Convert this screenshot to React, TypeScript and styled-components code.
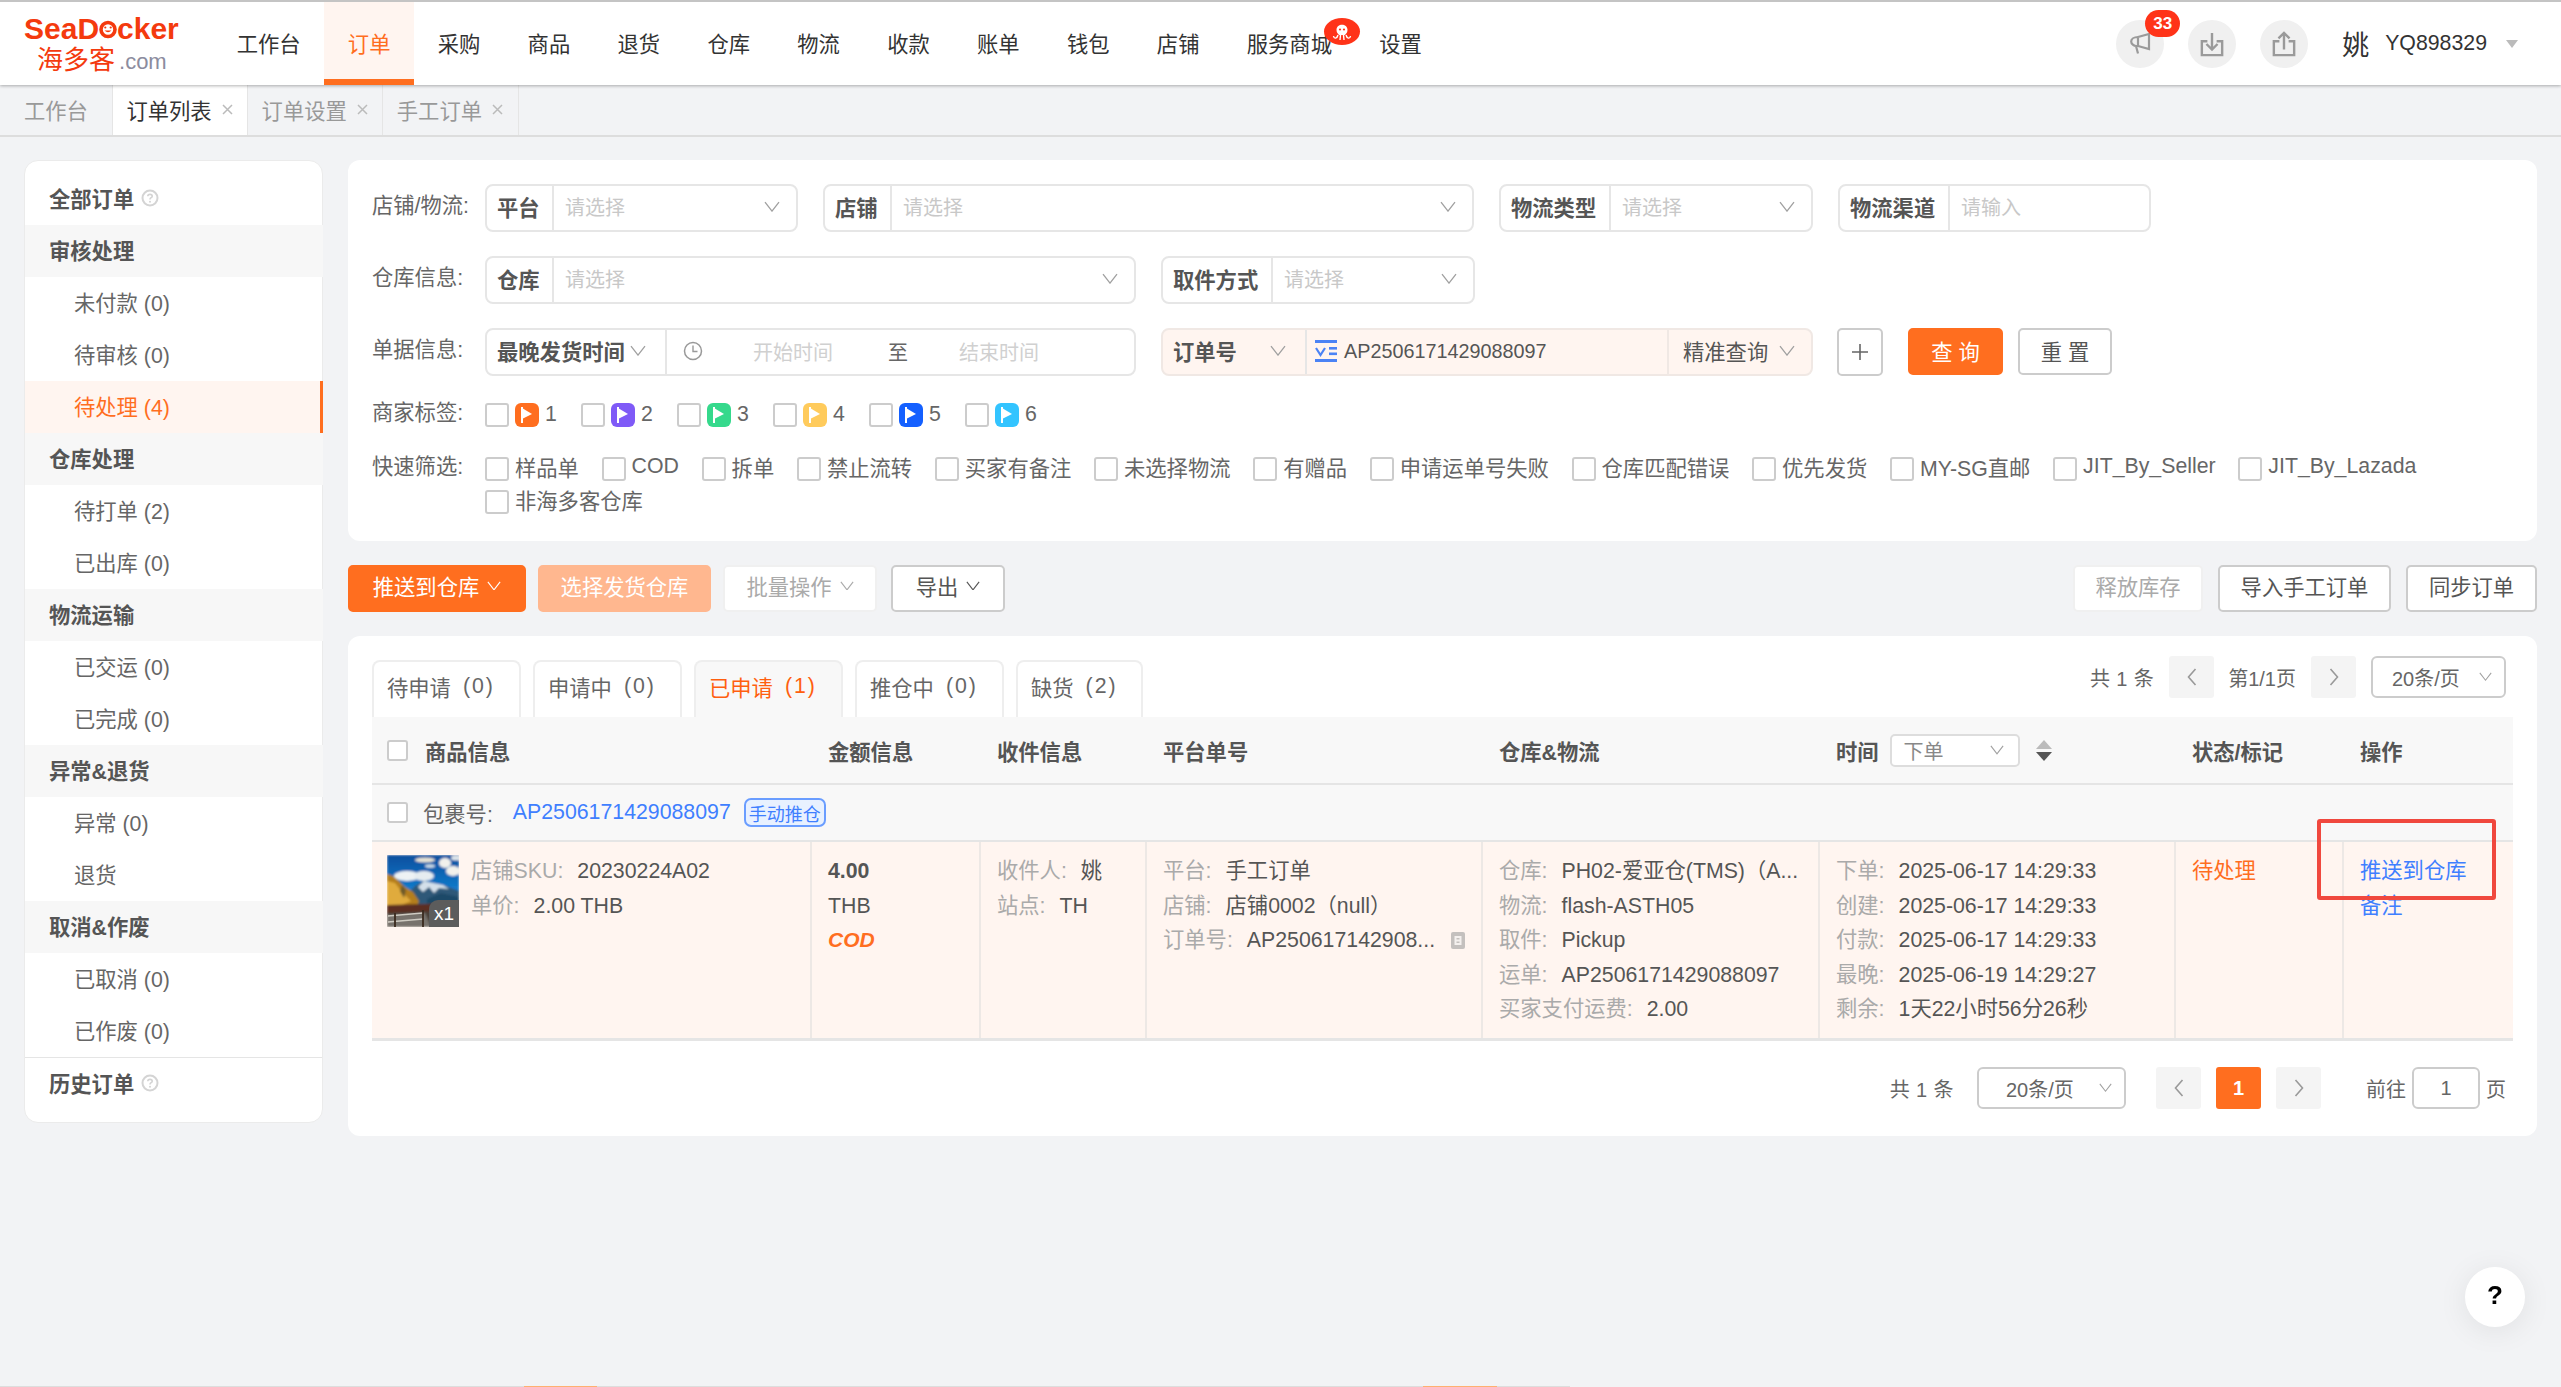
import styled, { createGlobalStyle } from 'styled-components';

const orange = '#ff6e1f';
const blue = '#3f7fff';

const GlobalStyle = createGlobalStyle`
  html, body {
    margin: 0;
    padding: 0;
    background: #f2f3f5;
    font-family: "Liberation Sans", "Noto Sans CJK SC", sans-serif;
    font-size: 21.3px;
    color: #666;
  }
  * { box-sizing: border-box; }
`;

const Chevron = ({ color = '#a0a0a0', width = 16 }: { color?: string; width?: number }) => (
  <svg width={width} height={width * 0.7} viewBox="0 0 16 11" fill="none" style={{ flexShrink: 0 }}>
    <path d="M1 1 L8 10 L15 1" stroke={color} strokeWidth="1.3" />
  </svg>
);

const CloseIcon = () => (
  <svg width="13" height="13" viewBox="0 0 13 13" fill="none">
    <path d="M2 2 L11 11 M11 2 L2 11" stroke="#bbb" strokeWidth="1.5" />
  </svg>
);

const HelpIcon = () => (
  <svg width="18" height="18" viewBox="0 0 18 18" fill="none">
    <circle cx="9" cy="9" r="7.5" stroke="#d4d4d4" strokeWidth="2" />
    <path d="M6.8 7.2 C6.8 4.8 11.2 4.8 11.2 7.2 C11.2 8.8 9 8.6 9 10.4" stroke="#d4d4d4" strokeWidth="1.6" />
    <circle cx="9" cy="12.8" r="1" fill="#d4d4d4" />
  </svg>
);

const FlagIcon = () => (
  <svg width="14" height="18" viewBox="0 0 14 18">
    <path d="M2 1 L2 17" stroke="#fff" strokeWidth="2" />
    <path d="M2 2 L12 8 L2 13 Z" fill="#fff" />
  </svg>
);

const Logo = () => (
  <LogoBox>
    <LogoTop>
      SeaD
      <svg width="18" height="23" viewBox="0 0 18 23" fill="none">
        <circle cx="9" cy="13.5" r="7" stroke="#f43a0e" strokeWidth="3.6" />
        <circle cx="6.3" cy="11.5" r="1.1" fill="#f43a0e" />
        <circle cx="11.7" cy="11.5" r="1.1" fill="#f43a0e" />
        <path d="M5.5 14.5 Q9 18 12.5 14.5 Z" fill="#f43a0e" />
      </svg>
      cker
    </LogoTop>
    <LogoBottom>
      海多客<LogoCom>.com</LogoCom>
    </LogoBottom>
  </LogoBox>
);

const LogoBox = styled.div`
  width: 213px;
  padding: 11px 0 0 24px;
  flex-shrink: 0;
`;

const LogoTop = styled.div`
  color: #f43a0e;
  font-size: 30px;
  font-weight: 700;
  line-height: 32px;
  white-space: nowrap;
`;

const LogoBottom = styled.div`
  color: #f43a0e;
  font-size: 26px;
  line-height: 30px;
  padding-left: 13px;
  white-space: nowrap;
`;

const LogoCom = styled.span`
  color: #8c8c9e;
  font-size: 22px;
  margin-left: 4px;
`;

const Octopus = () => (
  <svg width="22" height="20" viewBox="0 0 22 20" fill="none">
    <path d="M5.5 8 C5.5 1 16.5 1 16.5 8 C16.5 11 14.5 12 14 13 L8 13 C7.5 12 5.5 11 5.5 8 Z" fill="#fff" />
    <circle cx="9" cy="7.5" r="1.1" fill="#ff3318" />
    <circle cx="13" cy="7.5" r="1.1" fill="#ff3318" />
    <path d="M7 13 C6 17 3 17 2.5 14 M9.5 13 L9 18 M12.5 13 L13 18 M15 13 C16 17 19 17 19.5 14" stroke="#fff" strokeWidth="1.4" />
  </svg>
);

const navItems = ['工作台', '订单', '采购', '商品', '退货', '仓库', '物流', '收款', '账单', '钱包', '店铺', '服务商城', '设置'];

const Header = styled.header`
  height: 85px;
  display: flex;
  background: #fff;
  border-top: 2px solid #c4c4c4;
  box-shadow: 0 1px 3px rgba(0, 0, 0, 0.3);
  position: relative;
  z-index: 2;
`;

const NavList = styled.nav`
  display: flex;
`;

const NavItem = styled.div<{ $active?: boolean }>`
  position: relative;
  display: flex;
  align-items: center;
  padding: 4px 23.65px 0;
  height: 83px;
  color: ${(p) => (p.$active ? orange : '#333')};
  background: ${(p) => (p.$active ? '#fff5f0' : 'transparent')};
  border-bottom: 6px solid ${(p) => (p.$active ? orange : 'transparent')};
`;

const NavBadge = styled.div`
  position: absolute;
  top: 16px;
  right: -4px;
  width: 36px;
  height: 27px;
  border-radius: 50%;
  background: #ff3318;
  display: flex;
  align-items: center;
  justify-content: center;
`;

const HeaderRight = styled.div`
  margin-left: auto;
  display: flex;
  align-items: center;
  padding-right: 43px;
`;

const RoundIcon = styled.div`
  position: relative;
  width: 48px;
  height: 48px;
  border-radius: 50%;
  background: #f0f0f0;
  margin-right: 24px;
  display: flex;
  align-items: center;
  justify-content: center;
`;

const CountBadge = styled.div`
  position: absolute;
  top: -10px;
  left: 29px;
  width: 35px;
  height: 27px;
  border-radius: 14px;
  background: #ff3318;
  color: #fff;
  font-size: 17px;
  font-weight: 700;
  text-align: center;
  line-height: 27px;
`;

const Avatar = styled.div`
  font-size: 27px;
  color: #333;
  margin: 0 16px 0 10px;
`;

const UserName = styled.div`
  color: #333;
  margin-right: 19px;
`;

const CaretDown = styled.div`
  width: 0;
  height: 0;
  border-left: 6px solid transparent;
  border-right: 6px solid transparent;
  border-top: 8px solid #bbb;
`;

const TabBar = styled.div`
  height: 52px;
  display: flex;
  border-bottom: 2px solid #ddd;
`;

const PageTab = styled.div<{ $active?: boolean; $pad: number }>`
  display: flex;
  align-items: center;
  gap: 9px;
  padding: 0 ${(p) => p.$pad}px 2px;
  color: ${(p) => (p.$active ? '#333' : '#999')};
  background: ${(p) => (p.$active ? '#fff' : 'transparent')};
  border-right: 1px solid #e5e5e5;
`;

const Content = styled.div`
  display: flex;
  gap: 25px;
  padding: 23px 24px 0;
  align-items: flex-start;
`;

const Sidebar = styled.aside`
  width: 299px;
  flex-shrink: 0;
  background: #fff;
  border: 1px solid #ebebeb;
  border-radius: 14px;
  padding: 12px 0;
`;

const SideRow = styled.div<{ $kind: 'head' | 'group' | 'item' | 'active' }>`
  height: 52px;
  display: flex;
  align-items: center;
  gap: 7px;
  padding-bottom: 3px;
  padding-left: ${(p) => (p.$kind === 'head' || p.$kind === 'group' ? 24 : 49)}px;
  font-weight: ${(p) => (p.$kind === 'head' || p.$kind === 'group' ? 700 : 400)};
  color: ${(p) => (p.$kind === 'active' ? orange : p.$kind === 'item' ? '#666' : '#555')};
  background: ${(p) => (p.$kind === 'group' ? '#f7f7f7' : p.$kind === 'active' ? '#fff5f0' : 'transparent')};
  border-right: ${(p) => (p.$kind === 'active' ? `3px solid ${orange}` : 'none')};
  margin-right: -1px;
`;

const SideDivider = styled.div`
  height: 1px;
  background: #e5e5e5;
`;

const sideRows: { text: string; kind: 'head' | 'group' | 'item' | 'active' }[] = [
  { text: '审核处理', kind: 'group' },
  { text: '未付款 (0)', kind: 'item' },
  { text: '待审核 (0)', kind: 'item' },
  { text: '待处理 (4)', kind: 'active' },
  { text: '仓库处理', kind: 'group' },
  { text: '待打单 (2)', kind: 'item' },
  { text: '已出库 (0)', kind: 'item' },
  { text: '物流运输', kind: 'group' },
  { text: '已交运 (0)', kind: 'item' },
  { text: '已完成 (0)', kind: 'item' },
  { text: '异常&退货', kind: 'group' },
  { text: '异常 (0)', kind: 'item' },
  { text: '退货', kind: 'item' },
  { text: '取消&作废', kind: 'group' },
  { text: '已取消 (0)', kind: 'item' },
  { text: '已作废 (0)', kind: 'item' },
];

const Main = styled.main`
  flex: 1;
  min-width: 0;
  display: flex;
  flex-direction: column;
  gap: 24px;
`;

const FilterCard = styled.section`
  background: #fff;
  border-radius: 12px;
  height: 381px;
  padding: 24px 24px 0;
`;

const FilterRow = styled.div<{ $mb: number; $start?: boolean }>`
  display: flex;
  align-items: ${(p) => (p.$start ? 'flex-start' : 'center')};
  margin-bottom: ${(p) => p.$mb}px;
`;

const FilterLabel = styled.div`
  width: 113px;
  height: 24px;
  line-height: 21px;
  flex-shrink: 0;
  color: #666;
  white-space: nowrap;
`;

const Fields = styled.div`
  display: flex;
  align-items: center;
  gap: 25px;
`;

const Field = styled.div<{ $w: number; $tinted?: boolean }>`
  width: ${(p) => p.$w}px;
  height: 48px;
  display: flex;
  align-items: stretch;
  border: 2px solid ${(p) => (p.$tinted ? '#f0e8e4' : '#e6e6e6')};
  border-radius: 8px;
  background: ${(p) => (p.$tinted ? '#fff5f0' : '#fff')};
`;

const FieldKey = styled.div<{ $w: number }>`
  width: ${(p) => p.$w}px;
  flex-shrink: 0;
  display: flex;
  align-items: center;
  justify-content: space-between;
  padding: 0 0 3px 10px;
  font-weight: 700;
  color: #555;
  border-right: 2px solid #e6e6e6;
  white-space: nowrap;

  svg {
    margin-right: 19px;
  }
`;

const FieldBody = styled.div`
  flex: 1;
  min-width: 0;
  display: flex;
  align-items: center;
  justify-content: space-between;
  padding: 0 16px 3px 11px;
`;

const Placeholder = styled.span`
  color: #c8c8c8;
  font-size: 20px;
`;

const DateRange = styled.div`
  flex: 1;
  display: flex;
  align-items: center;
  padding: 0 0 2px 16px;
  font-size: 20px;
`;

const DateText = styled.span<{ $ml: number }>`
  margin-left: ${(p) => p.$ml}px;
  color: #d0d0d0;
`;

const DateTo = styled.span`
  margin-left: 55px;
  color: #666;
`;

const OrderValue = styled.div`
  flex: 1;
  display: flex;
  align-items: center;
  gap: 7px;
  padding: 0 0 2px 8px;
  font-size: 19.8px;
  color: #555;
`;

const ExactBox = styled.div`
  width: 144px;
  flex-shrink: 0;
  display: flex;
  align-items: center;
  justify-content: space-between;
  padding: 0 16px 3px 14px;
  color: #555;
  border-left: 2px solid #f0e8e4;
  white-space: nowrap;
`;

const Button = styled.button<{ $w: number; $kind?: 'primary' | 'soft' | 'plain' | 'muted' }>`
  width: ${(p) => p.$w}px;
  height: 47px;
  flex-shrink: 0;
  display: flex;
  align-items: center;
  justify-content: center;
  gap: 8px;
  padding: 0 0 3px ${(p) => (p.$w < 100 ? 6 : 0)}px;
  font: inherit;
  border-radius: 5px;
  border: 2px solid
    ${(p) =>
      p.$kind === 'primary' ? orange : p.$kind === 'soft' ? '#ffb78f' : p.$kind === 'muted' ? '#f0f0f0' : '#ccc'};
  background: ${(p) => (p.$kind === 'primary' ? orange : p.$kind === 'soft' ? '#ffb78f' : '#fff')};
  color: ${(p) => (p.$kind === 'primary' || p.$kind === 'soft' ? '#fff' : p.$kind === 'muted' ? '#aaa' : '#555')};
  letter-spacing: ${(p) => (p.$w < 100 ? '6px' : '0')};
`;

const SearchButtons = styled.div`
  display: flex;
  margin-left: -1px;
  gap: 15px;
`;

const PlusButton = styled(Button)`
  margin-right: 10px;
  padding: 0;
  height: 48px;
`;

const Checkbox = styled.span<{ $size?: number }>`
  display: inline-block;
  width: ${(p) => p.$size ?? 24}px;
  height: ${(p) => p.$size ?? 24}px;
  flex-shrink: 0;
  border: 2px solid #ccc;
  border-radius: 3px;
  background: #fff;
`;

const MarkRow = styled.div`
  display: flex;
`;

const MarkItem = styled.div`
  width: 96px;
  display: flex;
  align-items: center;
  gap: 6px;
`;

const MarkFlag = styled.span<{ $color: string }>`
  width: 24px;
  height: 24px;
  border-radius: 6px;
  background: ${(p) => p.$color};
  display: flex;
  align-items: center;
  justify-content: center;
`;

const QuickWrap = styled.div`
  display: flex;
  flex-wrap: wrap;
  row-gap: 9px;
  column-gap: 22.7px;
  width: 2020px;
`;

const QuickItem = styled.label`
  display: flex;
  align-items: center;
  gap: 6px;
  height: 24px;
  white-space: nowrap;
`;

const QuickText = styled.span`
  margin-top: -6px;
`;

const ActionRow = styled.div`
  display: flex;
  gap: 12px;

  button {
    padding-bottom: 6px;
  }
`;

const ActionGap = styled.div`
  margin-left: auto;
  display: flex;
  gap: 15px;
`;

const ExportGap = styled.div`
  display: flex;
  gap: 14px;
`;

const TableCard = styled.section`
  background: #fff;
  border-radius: 12px;
  height: 500px;
  padding: 20px 24px 0;
`;

const TopRow = styled.div`
  height: 61px;
  display: flex;
  justify-content: space-between;
`;

const StatusTabs = styled.div`
  align-self: flex-end;
  display: flex;
  gap: 12px;
`;

const StatusTab = styled.div<{ $active?: boolean; $w: number }>`
  width: ${(p) => p.$w}px;
  height: 57px;
  padding: 0 0 6px 13px;
  display: flex;
  align-items: center;
  gap: 12px;
  white-space: nowrap;
  color: ${(p) => (p.$active ? '#ff5f0f' : '#666')};
  background: ${(p) => (p.$active ? '#f8f8f8' : '#fff')};
  border: 2px solid #eee;
  border-bottom: none;
  border-radius: 8px 8px 0 0;
`;

const TabCount = styled.span`
  letter-spacing: 2px;
`;

const Pager = styled.div`
  display: flex;
  align-items: center;
  padding-right: 7px;
  font-size: 20px;
  height: 42px;
  white-space: nowrap;
`;

const PagerText = styled.span<{ $ml?: number; $wide?: boolean }>`
  margin-left: ${(p) => p.$ml ?? 0}px;
  letter-spacing: ${(p) => (p.$wide ? '0.4px' : '0')};
`;

const PageBtn = styled.div<{ $ml: number; $active?: boolean }>`
  width: 45px;
  height: 42px;
  margin-left: ${(p) => p.$ml}px;
  border-radius: 3px;
  background: ${(p) => (p.$active ? orange : '#f4f4f4')};
  color: #fff;
  font-weight: 700;
  display: flex;
  align-items: center;
  justify-content: center;
`;

const PagerSelect = styled.div<{ $w: number; $ml: number; $pl: number }>`
  width: ${(p) => p.$w}px;
  height: 42px;
  margin-left: ${(p) => p.$ml}px;
  padding: 0 12px 0 ${(p) => p.$pl}px;
  border: 2px solid #ccc;
  border-radius: 6px;
  display: flex;
  align-items: center;
  justify-content: space-between;
  background: #fff;
`;

const PageInput = styled.div`
  width: 68px;
  height: 42px;
  margin: 0 6px;
  border: 2px solid #ccc;
  border-radius: 6px;
  display: flex;
  align-items: center;
  justify-content: center;
`;

const TableWrap = styled.div`
  position: relative;
`;

const RedBox = styled.div`
  position: absolute;
  left: 1945px;
  top: 102px;
  width: 179px;
  height: 81px;
  border: 4px solid #f0483e;
  border-radius: 3px;
  pointer-events: none;
`;

const columns = '440px 169px 166px 336px 337px 356px 168px 169px';

const HeadRow = styled.div`
  display: grid;
  grid-template-columns: ${columns};
  height: 68px;
  background: #f8f8f8;
  border-bottom: 2px solid #e5e5e5;
`;

const HeadCell = styled.div`
  display: flex;
  align-items: center;
  gap: 11px;
  padding-left: 16px;
  font-weight: 700;
  color: #555;
  white-space: nowrap;
`;

const HeadFirst = styled(HeadCell)`
  padding-left: 15px;
  gap: 17px;
`;

const HeadSelect = styled.div`
  width: 130px;
  height: 33px;
  padding: 0 14px 0 12px;
  border: 2px solid #ddd;
  border-radius: 5px;
  background: #fff;
  display: flex;
  align-items: center;
  justify-content: space-between;
  font-size: 20px;
  font-weight: 400;
  color: #888;
`;

const SortBox = styled.div`
  display: flex;
  flex-direction: column;
  gap: 3px;
  margin-left: 5px;
`;

const SortUp = styled.div`
  width: 0;
  height: 0;
  border-left: 8px solid transparent;
  border-right: 8px solid transparent;
  border-bottom: 9px solid #bbb;
`;

const SortDown = styled.div`
  width: 0;
  height: 0;
  border-left: 8px solid transparent;
  border-right: 8px solid transparent;
  border-top: 9px solid #555;
`;

const PackRow = styled.div`
  height: 57px;
  display: flex;
  align-items: center;
  padding-left: 15px;
  background: #f8f8f8;
  border-bottom: 2px solid #e5e5e5;
  white-space: nowrap;
`;

const PackLabel = styled.span`
  margin-left: 15px;
  color: #666;
`;

const PackLink = styled.span`
  margin-left: 20px;
  color: ${blue};
`;

const PackBadge = styled.span`
  margin-left: 13px;
  width: 82px;
  height: 29px;
  border: 2px solid #6a9dff;
  border-radius: 7px;
  background: #e8f1ff;
  color: ${blue};
  font-size: 18px;
  display: flex;
  align-items: center;
  justify-content: center;
`;

const DataRow = styled.div`
  display: grid;
  grid-template-columns: ${columns};
  height: 199px;
  background: #fff5f0;
  border-bottom: 3px solid #e5e5e5;
`;

const DataCell = styled.div`
  padding: 12px 0 0 16px;
  line-height: 34.5px;
  border-right: 2px solid #ede8e5;
  white-space: nowrap;
  color: #555;

  &:last-child {
    border-right: none;
  }
`;

const GoodsCell = styled(DataCell)`
  display: flex;
  gap: 12px;
  padding-left: 15px;
`;

const Thumb = styled.div`
  position: relative;
  width: 72px;
  height: 72px;
  margin-top: 1px;
  flex-shrink: 0;
  overflow: hidden;
`;

const ThumbCount = styled.div`
  position: absolute;
  right: 0;
  bottom: 0;
  width: 30px;
  height: 27px;
  border-radius: 9px 0 0 0;
  background: #5c5c5c;
  color: #fff;
  font-size: 19px;
  line-height: 27px;
  text-align: center;
`;

const Line = styled.div`
  display: flex;
  align-items: center;
`;

const Key = styled.span`
  color: #aaa;
  margin-right: 14px;
`;

const BoldValue = styled.div`
  font-weight: 700;
  color: #555;
`;

const CodText = styled.div`
  color: ${orange};
  font-weight: 700;
  font-style: italic;
  font-size: 21px;
`;

const StatusText = styled.div`
  color: ${orange};
`;

const LinkText = styled.div`
  color: ${blue};
`;

const CopyIcon = styled.span`
  margin-left: 15px;
  display: flex;
`;

const BottomPager = styled.div`
  display: flex;
  justify-content: flex-end;
  margin-top: 26px;
`;

const HelpButton = styled.div`
  position: fixed;
  right: 36px;
  bottom: 60px;
  width: 60px;
  height: 60px;
  border-radius: 50%;
  background: #fff;
  box-shadow: 0 4px 30px rgba(0, 0, 0, 0.08);
  color: #000;
  font-size: 26px;
  font-weight: 700;
  padding-bottom: 3px;
  display: flex;
  align-items: center;
  justify-content: center;
`;

const BottomLine = styled.div`
  position: fixed;
  left: 0;
  bottom: 0;
  width: 1570px;
  height: 1px;
  background: linear-gradient(
    to right,
    #ddd 524px,
    #ffb070 524px,
    #ffb070 597px,
    #ddd 597px,
    #ddd 1423px,
    #ffb070 1423px,
    #ffb070 1497px,
    #ddd 1497px
  );
`;

const PageWrap = styled.div`
  position: relative;
  height: 1387px;
  overflow: hidden;
`;

const ThumbPicture = () => (
  <svg width="72" height="72" viewBox="0 0 72 72">
    <defs>
      <linearGradient id="thumbSky" x1="0" y1="0" x2="0" y2="1">
        <stop offset="0" stopColor="#0a4f9e" />
        <stop offset="0.45" stopColor="#1278c8" />
      </linearGradient>
      <filter id="thumbSoft">
        <feGaussianBlur stdDeviation="0.8" />
      </filter>
    </defs>
    <g filter="url(#thumbSoft)">
      <rect width="72" height="72" fill="url(#thumbSky)" />
      <ellipse cx="38" cy="5" rx="10" ry="2.5" fill="#e6e2d4" />
      <ellipse cx="43" cy="11" rx="5" ry="1.8" fill="#cfdde6" />
      <ellipse cx="58" cy="8" rx="6" ry="5" fill="#f2f1ec" />
      <ellipse cx="66" cy="16" rx="7" ry="5" fill="#f2f1ec" />
      <ellipse cx="69" cy="3" rx="5" ry="2.5" fill="#dfe6ea" />
      <ellipse cx="20" cy="21" rx="13" ry="5" fill="#eef2f4" />
      <ellipse cx="37" cy="21" rx="10" ry="5" fill="#e6ecf0" />
      <path d="M14 46 L28 31 L37 26 L46 28 L56 30 L72 36 L72 56 L14 56 Z" fill="#2f5878" />
      <path d="M31 32 L37 26 L46 28 L56 30 L62 34 L52 33 L47 38 L42 32 L36 37 Z" fill="#d4e0ea" />
      <path d="M40 44 L54 38 L72 42 L72 52 L40 52 Z" fill="#1f4a68" />
      <path d="M0 19 L6 21 L12 26 L18 32 L26 37 L32 46 L30 52 L0 56 Z" fill="#b47e1c" />
      <path d="M0 26 L8 28 L15 37 L24 46 L10 52 L0 50 Z" fill="#e0ab3c" />
      <path d="M15 30 L19 35 L17 43 L13 36 Z" fill="#6d5a2a" />
      <path d="M0 50 L72 48 L72 60 L0 60 Z" fill="#5c2f20" />
      <path d="M0 58 L72 55 L72 72 L0 72 Z" fill="#4a4038" />
      <path d="M0 60 L38 58 L44 72 L0 72 Z" fill="#77726c" />
    </g>
    <path d="M1 61 L36 58 M1 67 L36 64" stroke="#cfcbc2" strokeWidth="1.4" />
    <path d="M36 55 L36 72 M8 58 L8 72" stroke="#3a2a1e" strokeWidth="1.8" />
  </svg>
);

const CopyGlyph = () => (
  <svg width="16" height="19" viewBox="0 0 16 19">
    <rect x="1" y="1" width="14" height="17" rx="2" fill="#c4c0be" />
    <rect x="4.5" y="5" width="7" height="9" fill="#f4f0ee" />
    <rect x="6.5" y="7" width="3" height="1.5" fill="#c4c0be" />
    <rect x="6.5" y="10.5" width="3" height="1.5" fill="#c4c0be" />
  </svg>
);

const ListCheck = () => (
  <svg width="22" height="22" viewBox="0 0 22 22" fill="none" style={{ flexShrink: 0 }}>
    <rect x="0" y="0" width="22" height="3" fill="#4b83f5" />
    <rect x="0" y="19" width="22" height="3" fill="#4b83f5" />
    <path d="M1 8 L5.5 15 L10 8" stroke="#4b83f5" strokeWidth="2.2" />
    <rect x="14" y="7" width="8" height="2.6" fill="#4b83f5" />
    <rect x="14" y="12.5" width="8" height="2.6" fill="#4b83f5" />
  </svg>
);

const Arrow = ({ dir }: { dir: 'left' | 'right' }) => (
  <svg width="10" height="18" viewBox="0 0 10 18" fill="none">
    <path d={dir === 'left' ? 'M8.5 1 L1.5 9 L8.5 17' : 'M1.5 1 L8.5 9 L1.5 17'} stroke="#999" strokeWidth="1.6" />
  </svg>
);

const quickFilters = [
  '样品单',
  'COD',
  '拆单',
  '禁止流转',
  '买家有备注',
  '未选择物流',
  '有赠品',
  '申请运单号失败',
  '仓库匹配错误',
  '优先发货',
  'MY-SG直邮',
  'JIT_By_Seller',
  'JIT_By_Lazada',
  '非海多客仓库',
];

const markColors = ['#ff6e1f', '#7f5af7', '#35d98c', '#ffcb5c', '#1460ff', '#33c4ff'];

const statusTabs = [
  { name: '待申请', count: '(0)', w: 149 },
  { name: '申请中', count: '(0)', w: 149 },
  { name: '已申请', count: '(1)', w: 149, active: true },
  { name: '推仓中', count: '(0)', w: 149 },
  { name: '缺货', count: '(2)', w: 127 },
];

const KeyLine = ({ k, v }: { k: string; v: string }) => (
  <Line>
    <Key>{k}:</Key>
    {v}
  </Line>
);

export default function App() {
  return (
    <PageWrap>
      <GlobalStyle />
      <Header>
        <Logo />
        <NavList>
          {navItems.map((n) => (
            <NavItem key={n} $active={n === '订单'}>
              {n}
              {n === '服务商城' && (
                <NavBadge>
                  <Octopus />
                </NavBadge>
              )}
            </NavItem>
          ))}
        </NavList>
        <HeaderRight>
          <RoundIcon>
            <svg width="21" height="22" viewBox="0 0 21 22" fill="none">
              <path d="M8 4 L19 1 L19 16 L8 13 Z M8 4 C4 4 1.2 6 1.2 8.5 C1.2 11 4 13 6 13 L8 20.5" stroke="#9a9a9a" strokeWidth="2.2" />
            </svg>
            <CountBadge>33</CountBadge>
          </RoundIcon>
          <RoundIcon>
            <svg width="24" height="26" viewBox="0 0 26 28" fill="none">
              <path d="M8 11 L2 11 L2 26 L24 26 L24 11 L18 11" stroke="#9a9a9a" strokeWidth="2.6" />
              <path d="M13 2 L13 19 M7 14 L13 20 L19 14" stroke="#9a9a9a" strokeWidth="2.6" />
            </svg>
          </RoundIcon>
          <RoundIcon>
            <svg width="24" height="26" viewBox="0 0 26 28" fill="none">
              <path d="M8 11 L2 11 L2 26 L24 26 L24 11 L18 11" stroke="#9a9a9a" strokeWidth="2.6" />
              <path d="M13 20 L13 3 M7 8 L13 2 L19 8" stroke="#9a9a9a" strokeWidth="2.6" />
            </svg>
          </RoundIcon>
          <Avatar>姚</Avatar>
          <UserName>YQ898329</UserName>
          <CaretDown />
        </HeaderRight>
      </Header>

      <TabBar>
        <PageTab $pad={24}>工作台</PageTab>
        <PageTab $pad={13.5} $active>
          订单列表
          <CloseIcon />
        </PageTab>
        <PageTab $pad={13.5}>
          订单设置
          <CloseIcon />
        </PageTab>
        <PageTab $pad={13.5}>
          手工订单
          <CloseIcon />
        </PageTab>
      </TabBar>

      <Content>
        <Sidebar>
          <SideRow $kind="head">
            全部订单
            <HelpIcon />
          </SideRow>
          {sideRows.map((r) => (
            <SideRow key={r.text} $kind={r.kind}>
              {r.text}
            </SideRow>
          ))}
          <SideDivider />
          <SideRow $kind="head">
            历史订单
            <HelpIcon />
          </SideRow>
        </Sidebar>

        <Main>
          <FilterCard>
            <FilterRow $mb={24}>
              <FilterLabel>店铺/物流:</FilterLabel>
              <Fields>
                <Field $w={313}>
                  <FieldKey $w={67}>平台</FieldKey>
                  <FieldBody>
                    <Placeholder>请选择</Placeholder>
                    <Chevron />
                  </FieldBody>
                </Field>
                <Field $w={651}>
                  <FieldKey $w={67}>店铺</FieldKey>
                  <FieldBody>
                    <Placeholder>请选择</Placeholder>
                    <Chevron />
                  </FieldBody>
                </Field>
                <Field $w={314}>
                  <FieldKey $w={110}>物流类型</FieldKey>
                  <FieldBody>
                    <Placeholder>请选择</Placeholder>
                    <Chevron />
                  </FieldBody>
                </Field>
                <Field $w={313}>
                  <FieldKey $w={110}>物流渠道</FieldKey>
                  <FieldBody>
                    <Placeholder>请输入</Placeholder>
                  </FieldBody>
                </Field>
              </Fields>
            </FilterRow>

            <FilterRow $mb={24}>
              <FilterLabel>仓库信息:</FilterLabel>
              <Fields>
                <Field $w={651}>
                  <FieldKey $w={67}>仓库</FieldKey>
                  <FieldBody>
                    <Placeholder>请选择</Placeholder>
                    <Chevron />
                  </FieldBody>
                </Field>
                <Field $w={314}>
                  <FieldKey $w={110}>取件方式</FieldKey>
                  <FieldBody>
                    <Placeholder>请选择</Placeholder>
                    <Chevron />
                  </FieldBody>
                </Field>
              </Fields>
            </FilterRow>

            <FilterRow $mb={26}>
              <FilterLabel>单据信息:</FilterLabel>
              <Fields>
                <Field $w={651}>
                  <FieldKey $w={180}>
                    最晚发货时间
                    <Chevron />
                  </FieldKey>
                  <DateRange>
                    <svg width="20" height="20" viewBox="0 0 20 20" fill="none">
                      <circle cx="10" cy="10" r="8.5" stroke="#999" strokeWidth="1.5" />
                      <path d="M10 4.5 L10 10.5 L14.5 10.5" stroke="#999" strokeWidth="1.4" />
                    </svg>
                    <DateText $ml={50}>开始时间</DateText>
                    <DateTo>至</DateTo>
                    <DateText $ml={51}>结束时间</DateText>
                  </DateRange>
                </Field>
                <Field $w={652} $tinted>
                  <FieldKey $w={144}>
                    订单号
                    <Chevron />
                  </FieldKey>
                  <OrderValue>
                    <ListCheck />
                    AP2506171429088097
                  </OrderValue>
                  <ExactBox>
                    精准查询
                    <Chevron />
                  </ExactBox>
                </Field>
                <SearchButtons>
                  <PlusButton $w={46} $kind="plain">
                    <svg width="18" height="18" viewBox="0 0 18 18" fill="none">
                      <path d="M9 1 L9 17 M1 9 L17 9" stroke="#666" strokeWidth="1.6" />
                    </svg>
                  </PlusButton>
                  <Button $w={95} $kind="primary">
                    查询
                  </Button>
                  <Button $w={94} $kind="plain">
                    重置
                  </Button>
                </SearchButtons>
              </Fields>
            </FilterRow>

            <FilterRow $mb={30}>
              <FilterLabel>商家标签:</FilterLabel>
              <MarkRow>
                {markColors.map((c, i) => (
                  <MarkItem key={c}>
                    <Checkbox />
                    <MarkFlag $color={c}>
                      <FlagIcon />
                    </MarkFlag>
                    <span>{i + 1}</span>
                  </MarkItem>
                ))}
              </MarkRow>
            </FilterRow>

            <FilterRow $mb={0} $start>
              <FilterLabel>快速筛选:</FilterLabel>
              <QuickWrap>
                {quickFilters.map((q) => (
                  <QuickItem key={q}>
                    <Checkbox />
                    <QuickText>{q}</QuickText>
                  </QuickItem>
                ))}
              </QuickWrap>
            </FilterRow>
          </FilterCard>

          <ActionRow>
            <Button $w={178} $kind="primary">
              推送到仓库
              <Chevron color="#fff" width={14} />
            </Button>
            <Button $w={173} $kind="soft">
              选择发货仓库
            </Button>
            <ExportGap>
              <Button $w={154} $kind="muted">
                批量操作
                <Chevron color="#aaa" width={14} />
              </Button>
              <Button $w={114} $kind="plain">
                导出
                <Chevron color="#555" width={14} />
              </Button>
            </ExportGap>
            <ActionGap>
              <Button $w={130} $kind="muted">
                释放库存
              </Button>
              <Button $w={173} $kind="plain">
                导入手工订单
              </Button>
              <Button $w={131} $kind="plain">
                同步订单
              </Button>
            </ActionGap>
          </ActionRow>

          <TableCard>
            <TopRow>
              <StatusTabs>
                {statusTabs.map((t) => (
                  <StatusTab key={t.name} $active={t.active} $w={t.w}>
                    {t.name}
                    <TabCount>{t.count}</TabCount>
                  </StatusTab>
                ))}
              </StatusTabs>
              <Pager>
                <PagerText $wide>共 1 条</PagerText>
                <PageBtn $ml={15}>
                  <Arrow dir="left" />
                </PageBtn>
                <PagerText $ml={14}>第1/1页</PagerText>
                <PageBtn $ml={15}>
                  <Arrow dir="right" />
                </PageBtn>
                <PagerSelect $w={135} $ml={15} $pl={19}>
                  20条/页
                  <Chevron width={13} />
                </PagerSelect>
              </Pager>
            </TopRow>

            <TableWrap>
              <HeadRow>
                <HeadFirst>
                  <Checkbox $size={21} />
                  商品信息
                </HeadFirst>
                <HeadCell>金额信息</HeadCell>
                <HeadCell>收件信息</HeadCell>
                <HeadCell>平台单号</HeadCell>
                <HeadCell>仓库&物流</HeadCell>
                <HeadCell>
                  时间
                  <HeadSelect>
                    下单
                    <Chevron width={14} />
                  </HeadSelect>
                  <SortBox>
                    <SortUp />
                    <SortDown />
                  </SortBox>
                </HeadCell>
                <HeadCell>状态/标记</HeadCell>
                <HeadCell>操作</HeadCell>
              </HeadRow>

              <PackRow>
                <Checkbox $size={21} />
                <PackLabel>包裹号:</PackLabel>
                <PackLink>AP2506171429088097</PackLink>
                <PackBadge>手动推仓</PackBadge>
              </PackRow>

              <DataRow>
                <GoodsCell>
                  <Thumb>
                    <ThumbPicture />
                    <ThumbCount>x1</ThumbCount>
                  </Thumb>
                  <div>
                    <KeyLine k="店铺SKU" v="20230224A02" />
                    <KeyLine k="单价" v="2.00 THB" />
                  </div>
                </GoodsCell>
                <DataCell>
                  <BoldValue>4.00</BoldValue>
                  <div>THB</div>
                  <CodText>COD</CodText>
                </DataCell>
                <DataCell>
                  <KeyLine k="收件人" v="姚" />
                  <KeyLine k="站点" v="TH" />
                </DataCell>
                <DataCell>
                  <KeyLine k="平台" v="手工订单" />
                  <KeyLine k="店铺" v="店铺0002（null）" />
                  <Line>
                    <Key>订单号:</Key>
                    AP250617142908...
                    <CopyIcon>
                      <CopyGlyph />
                    </CopyIcon>
                  </Line>
                </DataCell>
                <DataCell>
                  <KeyLine k="仓库" v="PH02-爱亚仓(TMS)（A..." />
                  <KeyLine k="物流" v="flash-ASTH05" />
                  <KeyLine k="取件" v="Pickup" />
                  <KeyLine k="运单" v="AP2506171429088097" />
                  <KeyLine k="买家支付运费" v="2.00" />
                </DataCell>
                <DataCell>
                  <KeyLine k="下单" v="2025-06-17 14:29:33" />
                  <KeyLine k="创建" v="2025-06-17 14:29:33" />
                  <KeyLine k="付款" v="2025-06-17 14:29:33" />
                  <KeyLine k="最晚" v="2025-06-19 14:29:27" />
                  <KeyLine k="剩余" v="1天22小时56分26秒" />
                </DataCell>
                <DataCell>
                  <StatusText>待处理</StatusText>
                </DataCell>
                <DataCell>
                  <LinkText>推送到仓库</LinkText>
                  <LinkText>备注</LinkText>
                </DataCell>
              </DataRow>
              <RedBox />
            </TableWrap>

            <BottomPager>
              <Pager>
                <PagerText $wide>共 1 条</PagerText>
                <PagerSelect $w={149} $ml={23} $pl={27}>
                  20条/页
                  <Chevron width={13} />
                </PagerSelect>
                <PageBtn $ml={30}>
                  <Arrow dir="left" />
                </PageBtn>
                <PageBtn $ml={15} $active>
                  1
                </PageBtn>
                <PageBtn $ml={15}>
                  <Arrow dir="right" />
                </PageBtn>
                <PagerText $ml={45}>前往</PagerText>
                <PageInput>1</PageInput>
                页
              </Pager>
            </BottomPager>
          </TableCard>
        </Main>
      </Content>

      <HelpButton>?</HelpButton>
      <BottomLine />
    </PageWrap>
  );
}
